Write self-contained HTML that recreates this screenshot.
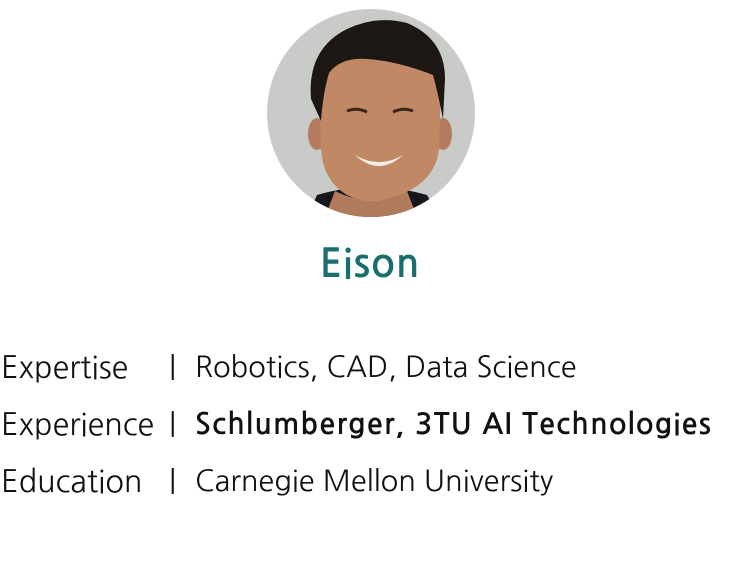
<!DOCTYPE html>
<html><head><meta charset="utf-8"><style>
html,body{margin:0;padding:0;background:#fff;width:744px;height:573px;overflow:hidden}
body{font-family:"NanumGothic","Liberation Sans",sans-serif;color:#111;position:relative}
.av{position:absolute;left:267px;top:9px;width:208px;height:208px}
.name{position:absolute;left:0;width:740px;top:244px;text-align:center;font-size:39px;font-weight:bold;color:#1a6e6e;letter-spacing:1px}
.row{position:absolute;left:1px;font-size:29px;line-height:34px;white-space:nowrap}
.row .l{position:absolute;left:0;font-size:30.5px}
.row .d{position:absolute;left:168px}
.row .v{position:absolute;left:194px}
.b{font-weight:bold;letter-spacing:1.2px}
</style></head><body>
<svg class="av" viewBox="0 0 208 208">
<defs><clipPath id="c"><circle cx="104" cy="104" r="104"/></clipPath></defs>
<g clip-path="url(#c)">
<rect width="208" height="208" fill="#c9cbc9"/>
<path d="M40 208 L50 186 Q104 170 160 186 L172 208Z" fill="#15171c"/>
<path d="M68 182 Q104 200 140 182 L150 208 L58 208Z" fill="#b07a5c"/>
<ellipse cx="50" cy="125" rx="9" ry="16" fill="#b57b5e"/>
<ellipse cx="176" cy="125" rx="9" ry="16" fill="#b57b5e"/>
<path d="M52 70 Q54 40 80 38 Q104 30 128 36 Q172 44 174 80 L172 140 Q168 180 112 192 Q96 194 80 186 Q56 172 54 140Z" fill="#c08864"/>
<path d="M44 90 Q40 40 80 20 Q110 6 140 14 Q178 30 178 70 L176 110 Q170 80 166 66 Q130 52 100 50 Q74 48 62 64 Q56 84 54 112Z" fill="#1d1714"/>
<path d="M80 102 Q90 98 100 103 M126 103 Q136 98 146 102" stroke="#3a2418" stroke-width="3" fill="none"/>
<path d="M88 146 Q112 160 136 146 Q112 168 88 146Z" fill="#f4eee8"/>
</g></svg>
<div class="name">Eison</div>
<div class="row" style="top:351px"><span class="l">Expertise</span><span class="d">|</span><span class="v">Robotics, CAD, Data Science</span></div>
<div class="row" style="top:408px"><span class="l">Experience</span><span class="d">|</span><span class="v b">Schlumberger, 3TU AI Technologies</span></div>
<div class="row" style="top:465px"><span class="l">Education</span><span class="d">|</span><span class="v">Carnegie Mellon University</span></div>
</body></html>
